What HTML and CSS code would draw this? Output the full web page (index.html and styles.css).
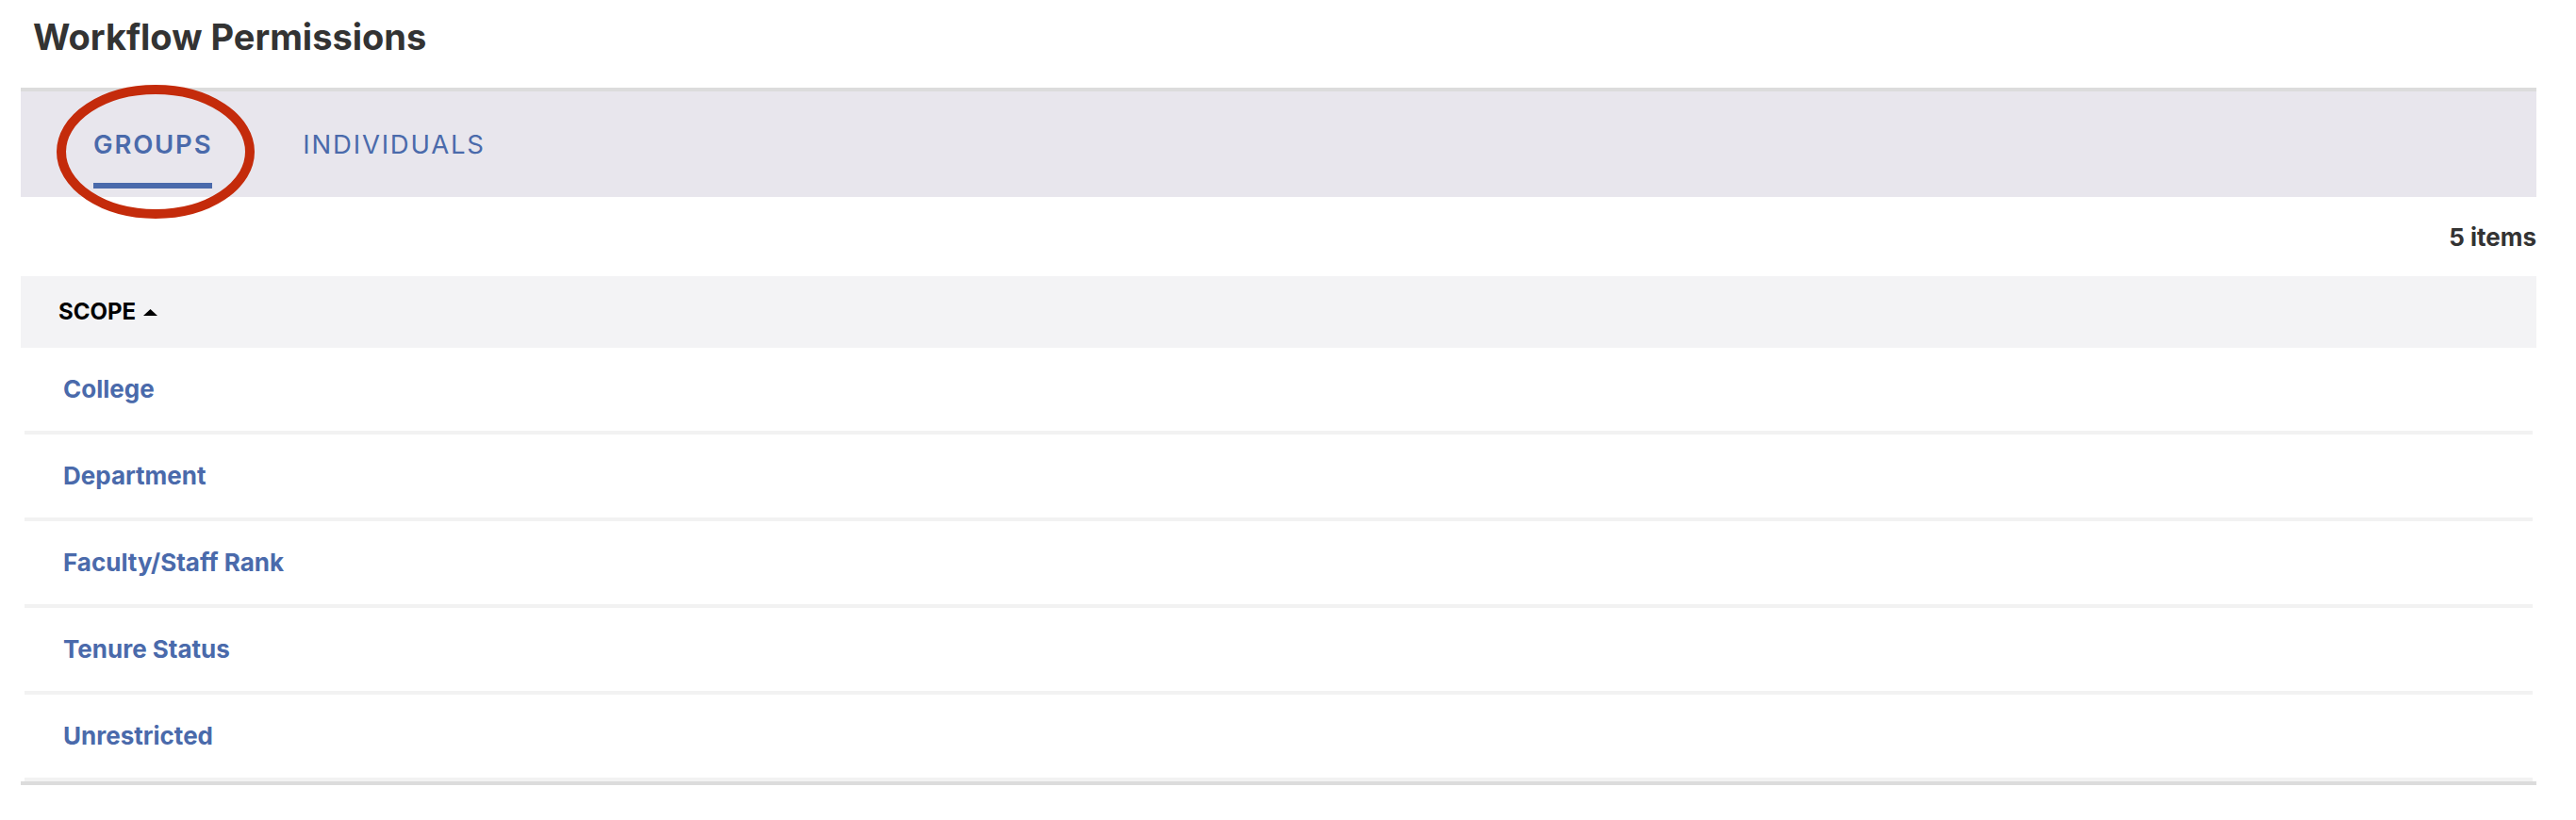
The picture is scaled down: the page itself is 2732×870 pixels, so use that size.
FILE: index.html
```html
<!DOCTYPE html>
<html lang="en">
<head>
    <meta charset="UTF-8">
    <title>Workflow Permissions</title>
    <link rel="stylesheet" href="styles.css">
</head>
<body>
    <h1 class="page-title">Workflow Permissions</h1>

    <div class="panel">
        <!-- Tabs -->
        <div class="tab-bar">
            <div class="tab active"><span>GROUPS</span></div>
            <div class="tab"><span>INDIVIDUALS</span></div>
        </div>
        <svg class="highlight" width="210" height="142" viewBox="0 0 210 142">
            <ellipse cx="105" cy="71" rx="100" ry="66" fill="none" stroke="#c42b0b" stroke-width="10"/>
        </svg>

        <div class="item-count">5 items</div>

        <!-- Table -->
        <div class="table">
            <div class="table-head">
                <span>SCOPE</span>
                <svg class="sort-arrow" width="15" height="7" viewBox="0 0 15 7">
                    <path d="M0 7 L7.5 0 L15 7 Z" fill="#000"/>
                </svg>
            </div>
            <div class="row"><a href="#">College</a></div>
            <div class="row"><a href="#">Department</a></div>
            <div class="row"><a href="#">Faculty/Staff Rank</a></div>
            <div class="row"><a href="#">Tenure Status</a></div>
            <div class="row"><a href="#">Unrestricted</a></div>
        </div>
    </div>
</body>
</html>
```

FILE: styles.css
```css
html, body {
    margin: 0;
    padding: 0;
    background: #fff;
}
body {
    font-family: Inter, 'Noto Sans', Arial, sans-serif;
    color: #333;
}
.page-title {
    font-size: 38px;
    line-height: 38px;
    font-weight: 700;
    color: #333;
    margin: 20px 0 35px 35px;
}
.panel {
    position: relative;
    margin: 0 42px 0 22px;
    border-bottom: 4px solid #dcdcdc;
}
/* Tabs */
.tab-bar {
    display: flex;
    gap: 98px;
    height: 112px;
    padding-left: 77px;
    background: #e8e6ed;
    border-top: 4px solid #dcdcdc;
}
.tab {
    padding-top: 43px;
    font-size: 27.5px;
    line-height: 27px;
    letter-spacing: 1.8px;
    color: #4a6aab;
    font-weight: 400;
}
.tab span {
    display: block;
    padding-bottom: 27px;
    border-bottom: 6px solid transparent;
}
.tab.active {
    font-weight: 600;
}
.tab.active span {
    border-bottom-color: #4a6aab;
    margin-right: -2px;
}
.highlight {
    position: absolute;
    left: 38px;
    top: -3px;
}
.item-count {
    text-align: right;
    font-size: 26px;
    line-height: 26px;
    font-weight: 700;
    color: #333;
    margin: 30px 0 28px;
}
/* Table */
.table-head {
    display: flex;
    align-items: center;
    gap: 8px;
    height: 76px;
    padding-left: 40px;
    background: #f3f3f5;
    font-size: 24px;
    line-height: 24px;
    font-weight: 700;
    color: #000;
}
.row {
    display: flex;
    align-items: center;
    height: 88px;
    margin: 0 4px;
    padding-left: 41px;
    border-bottom: 4px solid #f2f2f2;
}
.row a {
    font-size: 26px;
    line-height: 26px;
    font-weight: 700;
    color: #4a6aab;
    text-decoration: none;
}
```
